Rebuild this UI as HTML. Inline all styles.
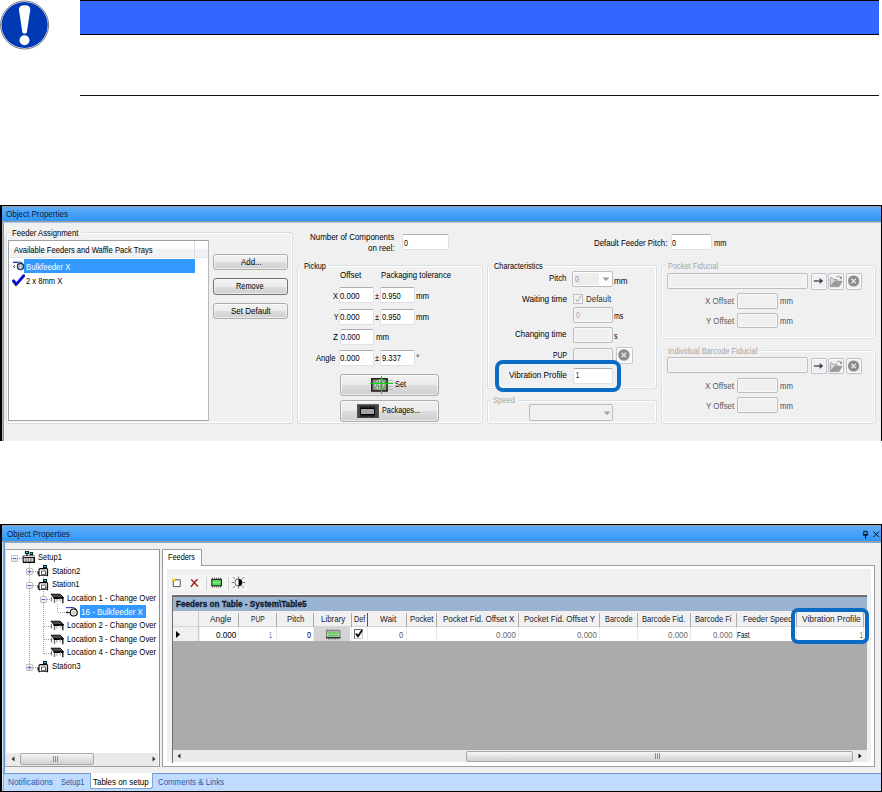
<!DOCTYPE html>
<html><head><meta charset="utf-8"><style>
html,body{margin:0;padding:0;width:882px;height:792px;overflow:hidden;background:#fff;position:relative;font-family:'Liberation Sans', sans-serif}
body>div,body>svg{position:absolute}
</style></head><body>
<svg style="left:0px;top:0px;" width="50" height="51" viewBox="0 0 50 51"><circle cx="24.6" cy="25" r="24" fill="#fff" stroke="#6A6A6A" stroke-width="0.9"/><circle cx="24.6" cy="25" r="23.1" fill="#0039B4"/><path d="M18.9 9.5 Q18.9 5.2 24.6 5.2 Q30.3 5.2 30.3 9.5 L26.8 32.6 Q24.6 35 22.4 32.6 Z" fill="#fff"/><circle cx="24.5" cy="40.2" r="5" fill="#fff"/></svg>
<div style="left:80px;top:0px;width:799px;height:35px;background:#3366FF;border-top:1px solid #000;border-bottom:1px solid #000;box-sizing:border-box"></div>
<div style="left:80px;top:95px;width:799px;height:1px;background:#111"></div>
<div style="left:0px;top:205px;width:882px;height:236px;background:#F0F0F0"></div>
<div style="left:0px;top:205px;width:882px;height:1px;background:#000"></div>
<div style="left:0px;top:205px;width:2px;height:236px;background:#000"></div>
<div style="left:881px;top:205px;width:1px;height:236px;background:#000"></div>
<div style="left:2px;top:206px;width:879px;height:1px;background:#9C9C9C"></div>
<div style="left:2px;top:207px;width:879px;height:14px;background:linear-gradient(#5EAEF9,#3196F6)"></div>
<div style="left:2px;top:221px;width:879px;height:1px;background:#9A9A9A"></div>
<div style="left:2px;top:222px;width:879px;height:1px;background:#A9C6EA"></div>
<div style="left:2px;top:222px;width:1px;height:219px;background:#B4B4B4"></div>
<div style="left:3px;top:223px;width:1px;height:218px;background:#6A98D0"></div>
<div style="left:5.54px;top:209.00px;font-size:8.7px;color:#0a1a3a;transform:scaleX(0.9236);line-height:10px;white-space:nowrap;transform-origin:0 0">Object Properties</div>
<div style="left:6px;top:232px;width:287px;height:192px;border:1px solid #D5DFE5;border-radius:3px;box-shadow:inset 0 0 0 1px #fff;box-sizing:border-box"></div>
<div style="left:9.5px;top:230px;width:72.3px;height:5px;background:#F0F0F0"></div>
<div style="left:12.06px;top:228.00px;font-size:8.7px;color:#000;transform:scaleX(0.8857);line-height:10px;white-space:nowrap;transform-origin:0 0">Feeder Assignment</div>
<div style="left:8px;top:240px;width:201px;height:181px;background:#fff;border:1px solid #A0A0A0;border-right-color:#B8B8B8;box-sizing:border-box"></div>
<div style="left:9px;top:241px;width:186px;height:16px;background:linear-gradient(#FFFFFF 0%,#FFFFFF 45%,#F1F2F4 50%,#F1F2F4 100%)"></div>
<div style="left:195px;top:241px;width:13px;height:16px;background:linear-gradient(#FFFFFF 0%,#FFFFFF 45%,#F1F2F4 50%,#F1F2F4 100%)"></div>
<div style="left:194px;top:241px;width:1px;height:16px;background:#DADDE1"></div>
<div style="left:9px;top:257px;width:199px;height:1px;background:#E3E5E8"></div>
<div style="left:14.06px;top:245.00px;font-size:8.7px;color:#000;transform:scaleX(0.8753);line-height:10px;white-space:nowrap;transform-origin:0 0">Available Feeders and Waffle Pack Trays</div>
<div style="left:24px;top:259px;width:171px;height:14px;background:#3399FF"></div>
<div style="left:26.15px;top:262.00px;font-size:8.7px;color:#fff;transform:scaleX(0.8905);line-height:10px;white-space:nowrap;transform-origin:0 0">Bulkfeeder X</div>
<div style="left:26.16px;top:275.50px;font-size:8.7px;color:#000;transform:scaleX(0.8740);line-height:10px;white-space:nowrap;transform-origin:0 0">2 x 8mm X</div>
<svg style="left:12px;top:259px;" width="13" height="12" viewBox="0 0 13 12"><path d="M0.8 3.3h5.5" stroke="#1030D8" stroke-width="1.3"/><path d="M6.3 3.1 Q9.5 2.4 10.8 4.6" fill="none" stroke="#203060" stroke-width="0.9"/><circle cx="8.5" cy="7.6" r="3.1" fill="#fff" stroke="#1A3060" stroke-width="1.3"/><path d="M7.6 5v5.2M9.4 5v5.2M5.8 7.6h5.4" stroke="#8890A0" stroke-width="0.6"/><path d="M3 6.3 L1.3 7.6 L3 8.9" fill="none" stroke="#203060" stroke-width="0.9"/></svg>
<svg style="left:12px;top:273px;" width="14" height="14" viewBox="0 0 14 14"><path d="M1.3 8.2 L4 11.9 L11.6 3.4" fill="none" stroke="#303030" stroke-width="2.4" stroke-linecap="round" stroke-linejoin="round"/><path d="M1.6 7.4 L4.3 11 L11.8 2.4" fill="none" stroke="#0A0AF0" stroke-width="2.4" stroke-linecap="round" stroke-linejoin="round"/></svg>
<div style="left:213px;top:254px;width:75px;height:16px;border:1px solid #ACACAC;border-radius:3px;box-sizing:border-box;background:linear-gradient(#F2F2F2 0%,#EBEBEB 50%,#DDDDDD 51%,#CFCFCF 100%);box-shadow:inset 0 0 0 1px rgba(255,255,255,0.6)"></div>
<div style="left:240.55px;top:257.00px;font-size:8.7px;color:#000;transform:scaleX(0.9074);line-height:10px;white-space:nowrap;transform-origin:0 0">Add...</div>
<div style="left:213px;top:278px;width:75px;height:17px;border:1px solid #707070;border-radius:3px;box-sizing:border-box;background:linear-gradient(#F2F2F2 0%,#EBEBEB 50%,#DDDDDD 51%,#CFCFCF 100%);box-shadow:inset 0 0 0 1px rgba(255,255,255,0.6)"></div>
<div style="left:236.08px;top:281.00px;font-size:8.7px;color:#000;transform:scaleX(0.8498);line-height:10px;white-space:nowrap;transform-origin:0 0">Remove</div>
<div style="left:213px;top:303px;width:75px;height:16px;border:1px solid #ACACAC;border-radius:3px;box-sizing:border-box;background:linear-gradient(#F2F2F2 0%,#EBEBEB 50%,#DDDDDD 51%,#CFCFCF 100%);box-shadow:inset 0 0 0 1px rgba(255,255,255,0.6)"></div>
<div style="left:230.54px;top:306.00px;font-size:8.7px;color:#000;transform:scaleX(0.9213);line-height:10px;white-space:nowrap;transform-origin:0 0">Set Default</div>
<div style="left:310.34px;top:232.00px;font-size:8.7px;color:#000;transform:scaleX(0.9129);line-height:10px;white-space:nowrap;transform-origin:0 0">Number of Components</div>
<div style="left:368.14px;top:243.20px;font-size:8.7px;color:#000;transform:scaleX(0.9108);line-height:10px;white-space:nowrap;transform-origin:0 0">on reel:</div>
<div style="left:402px;top:234px;width:47px;height:16px;background:#fff;border:1px solid #DDE1E6;border-top-color:#ABADB3;border-radius:2px;box-sizing:border-box"></div>
<div style="left:403.59px;top:238.00px;font-size:8.7px;color:#000;transform:scaleX(0.8258);line-height:10px;white-space:nowrap;transform-origin:0 0">0</div>
<div style="left:297px;top:265px;width:186px;height:159px;border:1px solid #D5DFE5;border-radius:3px;box-shadow:inset 0 0 0 1px #fff;box-sizing:border-box"></div>
<div style="left:301px;top:263px;width:27.9px;height:5px;background:#F0F0F0"></div>
<div style="left:303.58px;top:261.00px;font-size:8.7px;color:#000;transform:scaleX(0.8398);line-height:10px;white-space:nowrap;transform-origin:0 0">Pickup</div>
<div style="left:340.14px;top:269.80px;font-size:8.7px;color:#000;transform:scaleX(0.9205);line-height:10px;white-space:nowrap;transform-origin:0 0">Offset</div>
<div style="left:380.95px;top:269.80px;font-size:8.7px;color:#000;transform:scaleX(0.8903);line-height:10px;white-space:nowrap;transform-origin:0 0">Packaging tolerance</div>
<div style="left:332.57px;top:290.50px;font-size:8.7px;color:#000;transform:scaleX(0.8625);line-height:10px;white-space:nowrap;transform-origin:0 0">X</div>
<div style="left:338.5px;top:287px;width:35px;height:16px;background:#fff;border:1px solid #DDE1E6;border-top-color:#ABADB3;border-radius:2px;box-sizing:border-box"></div>
<div style="left:340.15px;top:290.50px;font-size:8.7px;color:#000;transform:scaleX(0.9011);line-height:10px;white-space:nowrap;transform-origin:0 0">0.000</div>
<div style="left:374.58px;top:290.50px;font-size:8.7px;color:#000;transform:scaleX(0.8366);line-height:10px;white-space:nowrap;transform-origin:0 0">±</div>
<div style="left:380px;top:287px;width:34.5px;height:16px;background:#fff;border:1px solid #DDE1E6;border-top-color:#ABADB3;border-radius:2px;box-sizing:border-box"></div>
<div style="left:381.87px;top:290.50px;font-size:8.7px;color:#000;transform:scaleX(0.8598);line-height:10px;white-space:nowrap;transform-origin:0 0">0.950</div>
<div style="left:416.35px;top:291.00px;font-size:8.7px;color:#000;transform:scaleX(0.9044);line-height:10px;white-space:nowrap;transform-origin:0 0">mm</div>
<div style="left:333.61px;top:311.90px;font-size:8.7px;color:#000;transform:scaleX(0.7763);line-height:10px;white-space:nowrap;transform-origin:0 0">Y</div>
<div style="left:338.5px;top:309px;width:35px;height:16px;background:#fff;border:1px solid #DDE1E6;border-top-color:#ABADB3;border-radius:2px;box-sizing:border-box"></div>
<div style="left:340.15px;top:311.90px;font-size:8.7px;color:#000;transform:scaleX(0.9011);line-height:10px;white-space:nowrap;transform-origin:0 0">0.000</div>
<div style="left:374.58px;top:311.90px;font-size:8.7px;color:#000;transform:scaleX(0.8366);line-height:10px;white-space:nowrap;transform-origin:0 0">±</div>
<div style="left:380px;top:309px;width:34.5px;height:16px;background:#fff;border:1px solid #DDE1E6;border-top-color:#ABADB3;border-radius:2px;box-sizing:border-box"></div>
<div style="left:381.87px;top:311.90px;font-size:8.7px;color:#000;transform:scaleX(0.8598);line-height:10px;white-space:nowrap;transform-origin:0 0">0.950</div>
<div style="left:416.35px;top:312.40px;font-size:8.7px;color:#000;transform:scaleX(0.9044);line-height:10px;white-space:nowrap;transform-origin:0 0">mm</div>
<div style="left:339.5px;top:329px;width:34px;height:16px;background:#fff;border:1px solid #DDE1E6;border-top-color:#ABADB3;border-radius:2px;box-sizing:border-box"></div>
<div style="left:332.53px;top:332.30px;font-size:8.7px;color:#000;transform:scaleX(0.9412);line-height:10px;white-space:nowrap;transform-origin:0 0">Z</div>
<div style="left:341.06px;top:332.40px;font-size:8.7px;color:#000;transform:scaleX(0.8736);line-height:10px;white-space:nowrap;transform-origin:0 0">0.000</div>
<div style="left:376.34px;top:332.20px;font-size:8.7px;color:#000;transform:scaleX(0.9113);line-height:10px;white-space:nowrap;transform-origin:0 0">mm</div>
<div style="left:339px;top:350px;width:34.5px;height:16px;background:#fff;border:1px solid #DDE1E6;border-top-color:#ABADB3;border-radius:2px;box-sizing:border-box"></div>
<div style="left:316.06px;top:353.00px;font-size:8.7px;color:#000;transform:scaleX(0.8770);line-height:10px;white-space:nowrap;transform-origin:0 0">Angle</div>
<div style="left:340.35px;top:353.00px;font-size:8.7px;color:#000;transform:scaleX(0.9011);line-height:10px;white-space:nowrap;transform-origin:0 0">0.000</div>
<div style="left:374.58px;top:353.00px;font-size:8.7px;color:#000;transform:scaleX(0.8366);line-height:10px;white-space:nowrap;transform-origin:0 0">±</div>
<div style="left:380px;top:350px;width:34.5px;height:16px;background:#fff;border:1px solid #DDE1E6;border-top-color:#ABADB3;border-radius:2px;box-sizing:border-box"></div>
<div style="left:381.86px;top:353.00px;font-size:8.7px;color:#000;transform:scaleX(0.8736);line-height:10px;white-space:nowrap;transform-origin:0 0">9.337</div>
<div style="left:416.30px;top:353.00px;font-size:8.7px;color:#000;transform:scaleX(1.0045);line-height:10px;white-space:nowrap;transform-origin:0 0">°</div>
<div style="left:340px;top:374px;width:99px;height:21.5px;border:1px solid #ACACAC;border-radius:3px;box-sizing:border-box;background:linear-gradient(#F2F2F2 0%,#EBEBEB 50%,#DDDDDD 51%,#CFCFCF 100%);box-shadow:inset 0 0 0 1px rgba(255,255,255,0.6)"></div>
<svg style="left:368px;top:375px;" width="28" height="20" viewBox="0 0 28 20"><rect x="3.8" y="3.8" width="15.3" height="12.2" fill="#8E8E8E" stroke="#000" stroke-width="1.3"/><circle cx="11.5" cy="9.6" r="4.4" fill="none" stroke="#F4F4F4" stroke-width="1" stroke-dasharray="1.2 0.8"/><path d="M11.5 5.2v8.8M7.1 9.6h8.8M9.3 5.8v7.6M13.7 5.8v7.6" stroke="#F0F0F0" stroke-width="0.8" stroke-dasharray="1.2 0.8"/><circle cx="13.5" cy="8.8" r="4.6" fill="none" stroke="#20E020" stroke-width="0.8"/><path d="M13.5 1V19M2 8.5H25" stroke="#00E000" stroke-width="1.1"/><path d="M20 5.3h5M20 7.3h5M20 11.6h5M20 14.5h5" stroke="#A8A8A8" stroke-width="0.7"/></svg>
<div style="left:394.98px;top:379.00px;font-size:8.7px;color:#000;transform:scaleX(0.8431);line-height:10px;white-space:nowrap;transform-origin:0 0">Set</div>
<div style="left:340px;top:400px;width:99px;height:21.5px;border:1px solid #ACACAC;border-radius:3px;box-sizing:border-box;background:linear-gradient(#F2F2F2 0%,#EBEBEB 50%,#DDDDDD 51%,#CFCFCF 100%);box-shadow:inset 0 0 0 1px rgba(255,255,255,0.6)"></div>
<svg style="left:356px;top:403px;" width="24" height="16" viewBox="0 0 24 16"><rect x="1.1" y="1.2" width="21.8" height="13.8" fill="#454545"/><rect x="4.2" y="4.6" width="14.8" height="7.8" fill="#000"/><path d="M4.6 3.9h14" stroke="#000" stroke-width="1.4" stroke-dasharray="1.1 1"/><path d="M4.6 13.1h14" stroke="#000" stroke-width="1.4" stroke-dasharray="1.1 1"/><rect x="5" y="6" width="13" height="5" fill="#A4A4A4"/></svg>
<div style="left:382.08px;top:405.20px;font-size:8.7px;color:#000;transform:scaleX(0.8369);line-height:10px;white-space:nowrap;transform-origin:0 0">Packages...</div>
<div style="left:594.25px;top:238.00px;font-size:8.7px;color:#000;transform:scaleX(0.8982);line-height:10px;white-space:nowrap;transform-origin:0 0">Default Feeder Pitch:</div>
<div style="left:670.5px;top:234px;width:41px;height:16px;background:#fff;border:1px solid #DDE1E6;border-top-color:#ABADB3;border-radius:2px;box-sizing:border-box"></div>
<div style="left:672.09px;top:238.00px;font-size:8.7px;color:#000;transform:scaleX(0.8258);line-height:10px;white-space:nowrap;transform-origin:0 0">0</div>
<div style="left:713.57px;top:237.80px;font-size:8.7px;color:#000;transform:scaleX(0.8630);line-height:10px;white-space:nowrap;transform-origin:0 0">mm</div>
<div style="left:487px;top:265px;width:170px;height:124px;border:1px solid #D5DFE5;border-radius:3px;box-shadow:inset 0 0 0 1px #fff;box-sizing:border-box"></div>
<div style="left:491px;top:263px;width:54.8px;height:5px;background:#F0F0F0"></div>
<div style="left:493.58px;top:261.00px;font-size:8.7px;color:#000;transform:scaleX(0.8494);line-height:10px;white-space:nowrap;transform-origin:0 0">Characteristics</div>
<div style="left:549.15px;top:273.00px;font-size:8.7px;color:#000;transform:scaleX(0.9002);line-height:10px;white-space:nowrap;transform-origin:0 0">Pitch</div>
<div style="left:572.2px;top:271.2px;width:40.4px;height:16.3px;background:#fff;border:1px solid #BDBDBD;border-radius:2px;box-sizing:border-box"></div>
<div style="left:573.5px;top:273px;width:25px;height:12px;background:#EDEDED"></div>
<svg style="left:601px;top:276px;" width="10" height="6" viewBox="0 0 10 6"><path d="M1.5 1.5h7l-3.5 3.5z" fill="#9A9A9A"/></svg>
<div style="left:574.59px;top:273.50px;font-size:8.7px;color:#959595;transform:scaleX(0.8258);line-height:10px;white-space:nowrap;transform-origin:0 0">0</div>
<div style="left:614.23px;top:275.50px;font-size:8.7px;color:#000;transform:scaleX(0.9389);line-height:10px;white-space:nowrap;transform-origin:0 0">mm</div>
<div style="left:521.53px;top:294.00px;font-size:8.7px;color:#000;transform:scaleX(0.9477);line-height:10px;white-space:nowrap;transform-origin:0 0">Waiting time</div>
<div style="left:573px;top:294.3px;width:10px;height:9.5px;background:#F4F4F4;border:1px solid #C0C0C0;box-sizing:border-box"></div>
<svg style="left:573px;top:294.3px;" width="10" height="10" viewBox="0 0 10 10"><path d="M2.5 5 L4.5 7.8 L7.8 1.8" fill="none" stroke="#A8A8A8" stroke-width="1"/></svg>
<div style="left:586.14px;top:294.00px;font-size:8.7px;color:#333;transform:scaleX(0.9153);line-height:10px;white-space:nowrap;transform-origin:0 0">Default</div>
<div style="left:573px;top:307px;width:39.5px;height:15.5px;background:#F0F0F0;border:1px solid #BDBDBD;border-radius:2px;box-sizing:border-box;box-shadow:inset 0 0 0 1px #F8F8F8"></div>
<div style="left:575.59px;top:310.00px;font-size:8.7px;color:#A8A8A8;transform:scaleX(0.8258);line-height:10px;white-space:nowrap;transform-origin:0 0">0</div>
<div style="left:614.30px;top:310.50px;font-size:8.7px;color:#000;transform:scaleX(0.8022);line-height:10px;white-space:nowrap;transform-origin:0 0">ms</div>
<div style="left:515.44px;top:329.40px;font-size:8.7px;color:#000;transform:scaleX(0.9191);line-height:10px;white-space:nowrap;transform-origin:0 0">Changing time</div>
<div style="left:573px;top:326.5px;width:40px;height:16px;background:#F0F0F0;border:1px solid #BDBDBD;border-radius:2px;box-sizing:border-box;box-shadow:inset 0 0 0 1px #F8F8F8"></div>
<div style="left:614.10px;top:330.70px;font-size:8.7px;color:#000;transform:scaleX(0.8058);line-height:10px;white-space:nowrap;transform-origin:0 0">s</div>
<div style="left:553.41px;top:350.00px;font-size:8.7px;color:#000;transform:scaleX(0.7888);line-height:10px;white-space:nowrap;transform-origin:0 0">PUP</div>
<div style="left:573px;top:347.5px;width:40px;height:16px;background:#F0F0F0;border:1px solid #BDBDBD;border-radius:2px;box-sizing:border-box;box-shadow:inset 0 0 0 1px #F8F8F8"></div>
<div style="left:616px;top:347px;width:16.5px;height:16.7px;background:#F4F4F4;border:1px solid #C4C8CC;border-radius:2px;box-sizing:border-box;box-shadow:inset 0 0 0 1px #fff"></div>
<svg style="left:616px;top:347px;" width="17" height="17" viewBox="0 0 17 17"><circle cx="7.9" cy="8" r="5.7" fill="#8A8A8A"/><path d="M5.6 5.7l4.6 4.6M10.2 5.7L5.6 10.3" stroke="#E4E4E4" stroke-width="1.5"/></svg>
<div style="left:508.53px;top:370.00px;font-size:8.7px;color:#000;transform:scaleX(0.9465);line-height:10px;white-space:nowrap;transform-origin:0 0">Vibration Profile</div>
<div style="left:573px;top:367.5px;width:40px;height:16px;background:#fff;border:1px solid #DDE1E6;border-top-color:#ABADB3;border-radius:2px;box-sizing:border-box"></div>
<div style="left:575.69px;top:370.00px;font-size:8.7px;color:#000;transform:scaleX(0.6194);line-height:10px;white-space:nowrap;transform-origin:0 0">1</div>
<div style="left:487px;top:399.5px;width:170px;height:24.5px;border:1px solid #D5DFE5;border-radius:3px;box-shadow:inset 0 0 0 1px #fff;box-sizing:border-box"></div>
<div style="left:490px;top:397.5px;width:28px;height:5px;background:#F0F0F0"></div>
<div style="left:492.56px;top:395.00px;font-size:8.7px;color:#A8A8A8;transform:scaleX(0.8756);line-height:10px;white-space:nowrap;transform-origin:0 0">Speed</div>
<div style="left:528.5px;top:404px;width:84px;height:16.5px;background:#F0F0F0;border:1px solid #BDBDBD;border-radius:2px;box-sizing:border-box"></div>
<svg style="left:602px;top:410px;" width="10" height="6" viewBox="0 0 10 6"><path d="M1.5 1.5h7l-3.5 3.5z" fill="#A0A0A0"/></svg>
<div style="left:494.5px;top:360.3px;width:126.8px;height:31.6px;border:4.4px solid #0B6BC2;border-radius:8px;box-sizing:border-box"></div>
<div style="left:661px;top:265px;width:215px;height:74px;border:1px solid #D5DFE5;border-radius:3px;box-shadow:inset 0 0 0 1px #fff;box-sizing:border-box"></div>
<div style="left:665.5px;top:263px;width:56.2px;height:5px;background:#F0F0F0"></div>
<div style="left:668.07px;top:261.00px;font-size:8.7px;color:#A6A6A6;transform:scaleX(0.8520);line-height:10px;white-space:nowrap;transform-origin:0 0">Pocket Fiducial</div>
<div style="left:666.5px;top:272.5px;width:141.5px;height:16px;background:#F0F0F0;border:1px solid #BDBDBD;border-radius:2px;box-sizing:border-box;box-shadow:inset 0 0 0 1px #F8F8F8"></div>
<div style="left:810.5px;top:273px;width:16.5px;height:16.5px;background:#F0F0F0;border:1px solid #BCC3CA;border-radius:2px;box-sizing:border-box;box-shadow:inset 0 0 0 1px #FAFAFA"></div>
<div style="left:828.3px;top:273px;width:16.2px;height:16.5px;background:#F0F0F0;border:1px solid #BCC3CA;border-radius:2px;box-sizing:border-box;box-shadow:inset 0 0 0 1px #FAFAFA"></div>
<div style="left:846.3px;top:273px;width:15.6px;height:16.5px;background:#F0F0F0;border:1px solid #BCC3CA;border-radius:2px;box-sizing:border-box;box-shadow:inset 0 0 0 1px #FAFAFA"></div>
<svg style="left:812px;top:275px;" width="14" height="12" viewBox="0 0 14 12"><path d="M1.8 6H9" stroke="#404040" stroke-width="1.3"/><path d="M7.6 3 L11.2 6 L7.6 9 Z" fill="#404040"/></svg>
<svg style="left:829px;top:274px;" width="15" height="15" viewBox="0 0 15 15"><path d="M1.3 4.6 Q1.5 3.4 2.6 3.6 L3.8 4.6 L4.6 5.6 L8 5.6 L8 7 L1.3 12.6 Z" fill="#DCDCDC" stroke="#8A8A8A" stroke-width="0.8"/><path d="M1.3 12.6 L5.6 7.2 L13.2 7.2 L10 12.6 Z" fill="#9A9A9A" stroke="#8A8A8A" stroke-width="0.6"/><path d="M7.4 3.4 Q9.6 0.6 11.6 3" fill="none" stroke="#9A9A9A" stroke-width="1"/><path d="M10.4 3.8 L13 2.4 L12.4 5.2 Z" fill="#707070"/></svg>
<svg style="left:847px;top:274px;" width="14" height="14" viewBox="0 0 14 14"><circle cx="6.6" cy="7" r="5.6" fill="#8A8A8A"/><path d="M4.4 4.8l4.4 4.4M8.8 4.8L4.4 9.2" stroke="#E6E6E6" stroke-width="1.4"/></svg>
<div style="left:705.44px;top:296.30px;font-size:8.7px;color:#5A5A5A;transform:scaleX(0.9253);line-height:10px;white-space:nowrap;transform-origin:0 0">X Offset</div>
<div style="left:736.5px;top:293.4px;width:41.2px;height:15.6px;background:#F0F0F0;border:1px solid #BDBDBD;border-radius:2px;box-sizing:border-box;box-shadow:inset 0 0 0 1px #F8F8F8"></div>
<div style="left:780.06px;top:296.30px;font-size:8.7px;color:#4A4A6A;transform:scaleX(0.8837);line-height:10px;white-space:nowrap;transform-origin:0 0">mm</div>
<div style="left:706.35px;top:316.00px;font-size:8.7px;color:#5A5A5A;transform:scaleX(0.9074);line-height:10px;white-space:nowrap;transform-origin:0 0">Y Offset</div>
<div style="left:736.5px;top:312.8px;width:41.2px;height:15.4px;background:#F0F0F0;border:1px solid #BDBDBD;border-radius:2px;box-sizing:border-box;box-shadow:inset 0 0 0 1px #F8F8F8"></div>
<div style="left:780.06px;top:316.00px;font-size:8.7px;color:#4A4A6A;transform:scaleX(0.8837);line-height:10px;white-space:nowrap;transform-origin:0 0">mm</div>
<div style="left:661px;top:349.5px;width:215px;height:74px;border:1px solid #D5DFE5;border-radius:3px;box-shadow:inset 0 0 0 1px #fff;box-sizing:border-box"></div>
<div style="left:665.5px;top:347.5px;width:95.3px;height:5px;background:#F0F0F0"></div>
<div style="left:668.07px;top:345.50px;font-size:8.7px;color:#A6A6A6;transform:scaleX(0.8601);line-height:10px;white-space:nowrap;transform-origin:0 0">Individual Barcode Fiducial</div>
<div style="left:666.5px;top:357.0px;width:141.5px;height:16px;background:#F0F0F0;border:1px solid #BDBDBD;border-radius:2px;box-sizing:border-box;box-shadow:inset 0 0 0 1px #F8F8F8"></div>
<div style="left:810.5px;top:357.5px;width:16.5px;height:16.5px;background:#F0F0F0;border:1px solid #BCC3CA;border-radius:2px;box-sizing:border-box;box-shadow:inset 0 0 0 1px #FAFAFA"></div>
<div style="left:828.3px;top:357.5px;width:16.2px;height:16.5px;background:#F0F0F0;border:1px solid #BCC3CA;border-radius:2px;box-sizing:border-box;box-shadow:inset 0 0 0 1px #FAFAFA"></div>
<div style="left:846.3px;top:357.5px;width:15.6px;height:16.5px;background:#F0F0F0;border:1px solid #BCC3CA;border-radius:2px;box-sizing:border-box;box-shadow:inset 0 0 0 1px #FAFAFA"></div>
<svg style="left:812px;top:359.5px;" width="14" height="12" viewBox="0 0 14 12"><path d="M1.8 6H9" stroke="#404040" stroke-width="1.3"/><path d="M7.6 3 L11.2 6 L7.6 9 Z" fill="#404040"/></svg>
<svg style="left:829px;top:358.5px;" width="15" height="15" viewBox="0 0 15 15"><path d="M1.3 4.6 Q1.5 3.4 2.6 3.6 L3.8 4.6 L4.6 5.6 L8 5.6 L8 7 L1.3 12.6 Z" fill="#DCDCDC" stroke="#8A8A8A" stroke-width="0.8"/><path d="M1.3 12.6 L5.6 7.2 L13.2 7.2 L10 12.6 Z" fill="#9A9A9A" stroke="#8A8A8A" stroke-width="0.6"/><path d="M7.4 3.4 Q9.6 0.6 11.6 3" fill="none" stroke="#9A9A9A" stroke-width="1"/><path d="M10.4 3.8 L13 2.4 L12.4 5.2 Z" fill="#707070"/></svg>
<svg style="left:847px;top:358.5px;" width="14" height="14" viewBox="0 0 14 14"><circle cx="6.6" cy="7" r="5.6" fill="#8A8A8A"/><path d="M4.4 4.8l4.4 4.4M8.8 4.8L4.4 9.2" stroke="#E6E6E6" stroke-width="1.4"/></svg>
<div style="left:705.44px;top:380.80px;font-size:8.7px;color:#5A5A5A;transform:scaleX(0.9253);line-height:10px;white-space:nowrap;transform-origin:0 0">X Offset</div>
<div style="left:736.5px;top:377.9px;width:41.2px;height:15.6px;background:#F0F0F0;border:1px solid #BDBDBD;border-radius:2px;box-sizing:border-box;box-shadow:inset 0 0 0 1px #F8F8F8"></div>
<div style="left:780.06px;top:380.80px;font-size:8.7px;color:#4A4A6A;transform:scaleX(0.8837);line-height:10px;white-space:nowrap;transform-origin:0 0">mm</div>
<div style="left:706.35px;top:400.50px;font-size:8.7px;color:#5A5A5A;transform:scaleX(0.9074);line-height:10px;white-space:nowrap;transform-origin:0 0">Y Offset</div>
<div style="left:736.5px;top:397.3px;width:41.2px;height:15.4px;background:#F0F0F0;border:1px solid #BDBDBD;border-radius:2px;box-sizing:border-box;box-shadow:inset 0 0 0 1px #F8F8F8"></div>
<div style="left:780.06px;top:400.50px;font-size:8.7px;color:#4A4A6A;transform:scaleX(0.8837);line-height:10px;white-space:nowrap;transform-origin:0 0">mm</div>
<div style="left:0px;top:524px;width:882px;height:268px;background:#F0F0F0"></div>
<div style="left:0px;top:524px;width:882px;height:1px;background:#000"></div>
<div style="left:0px;top:524px;width:2px;height:268px;background:#000"></div>
<div style="left:881px;top:524px;width:1px;height:268px;background:#000"></div>
<div style="left:0px;top:791px;width:882px;height:1px;background:#000"></div>
<div style="left:2px;top:525px;width:879px;height:1px;background:#9C9C9C"></div>
<div style="left:2px;top:526px;width:879px;height:15px;background:linear-gradient(#5EAEF9,#3196F6)"></div>
<div style="left:2px;top:541px;width:879px;height:1px;background:#9A9A9A"></div>
<div style="left:2px;top:542px;width:879px;height:1px;background:#84AADA"></div>
<div style="left:2px;top:542px;width:1px;height:249px;background:#D6E4F2"></div>
<div style="left:3px;top:542px;width:1px;height:249px;background:#A4A4A4"></div>
<div style="left:4px;top:542px;width:1px;height:231px;background:#6A98D0"></div>
<div style="left:6.83px;top:529.30px;font-size:8.7px;color:#0a1a3a;transform:scaleX(0.9371);line-height:10px;white-space:nowrap;transform-origin:0 0">Object Properties</div>
<svg style="left:862px;top:530px;" width="20" height="10" viewBox="0 0 20 10"><path d="M1.8 1.3h3.4v3.6h-3.4z" fill="none" stroke="#000" stroke-width="0.9"/><path d="M0.8 5h5.4M3.5 5v3.8" stroke="#000" stroke-width="0.9"/><path d="M11.5 1.5l5.5 5.5M17 1.5L11.5 7" stroke="#000" stroke-width="0.9"/></svg>
<div style="left:5px;top:549px;width:155px;height:218px;background:#fff;border:1px solid #A0A0A0;border-left-color:#DCDCDC;border-right-color:#8A9098;box-sizing:border-box"></div>
<div style="left:29px;top:563px;width:1px;height:104px;background:repeating-linear-gradient(#A0A0A0 0 1px,transparent 1px 2px)"></div>
<div style="left:43px;top:577px;width:1px;height:77px;background:repeating-linear-gradient(#A0A0A0 0 1px,transparent 1px 2px)"></div>
<div style="left:57px;top:604px;width:1px;height:7px;background:repeating-linear-gradient(#A0A0A0 0 1px,transparent 1px 2px)"></div>
<div style="left:19px;top:558px;width:4px;height:1px;background:repeating-linear-gradient(90deg,#A0A0A0 0 1px,transparent 1px 2px)"></div>
<div style="left:33px;top:571px;width:5px;height:1px;background:repeating-linear-gradient(90deg,#A0A0A0 0 1px,transparent 1px 2px)"></div>
<div style="left:33px;top:585px;width:5px;height:1px;background:repeating-linear-gradient(90deg,#A0A0A0 0 1px,transparent 1px 2px)"></div>
<div style="left:47px;top:599px;width:4px;height:1px;background:repeating-linear-gradient(90deg,#A0A0A0 0 1px,transparent 1px 2px)"></div>
<div style="left:44px;top:626px;width:7px;height:1px;background:repeating-linear-gradient(90deg,#A0A0A0 0 1px,transparent 1px 2px)"></div>
<div style="left:44px;top:639px;width:7px;height:1px;background:repeating-linear-gradient(90deg,#A0A0A0 0 1px,transparent 1px 2px)"></div>
<div style="left:44px;top:653px;width:7px;height:1px;background:repeating-linear-gradient(90deg,#A0A0A0 0 1px,transparent 1px 2px)"></div>
<div style="left:58px;top:612px;width:8px;height:1px;background:repeating-linear-gradient(90deg,#A0A0A0 0 1px,transparent 1px 2px)"></div>
<div style="left:33px;top:667px;width:5px;height:1px;background:repeating-linear-gradient(90deg,#A0A0A0 0 1px,transparent 1px 2px)"></div>
<div style="left:11px;top:555px;width:7px;height:7px;border:1px solid #C0C0C0;border-radius:1px;box-sizing:border-box;background:linear-gradient(#FDFDFD,#E2E2E2)"></div>
<svg style="left:11px;top:555px;" width="7" height="7" viewBox="0 0 7 7"><path d="M1.6 3.5h3.8" stroke="#4B66B8" stroke-width="1"/></svg>
<div style="left:26px;top:568px;width:7px;height:7px;border:1px solid #C0C0C0;border-radius:1px;box-sizing:border-box;background:linear-gradient(#FDFDFD,#E2E2E2)"></div>
<svg style="left:26px;top:568px;" width="7" height="7" viewBox="0 0 7 7"><path d="M1.6 3.5h3.8" stroke="#4B66B8" stroke-width="1"/><path d="M3.5 1.6v3.8" stroke="#6A84C8" stroke-width="1"/></svg>
<div style="left:26px;top:582px;width:7px;height:7px;border:1px solid #C0C0C0;border-radius:1px;box-sizing:border-box;background:linear-gradient(#FDFDFD,#E2E2E2)"></div>
<svg style="left:26px;top:582px;" width="7" height="7" viewBox="0 0 7 7"><path d="M1.6 3.5h3.8" stroke="#4B66B8" stroke-width="1"/></svg>
<div style="left:40px;top:596px;width:7px;height:7px;border:1px solid #C0C0C0;border-radius:1px;box-sizing:border-box;background:linear-gradient(#FDFDFD,#E2E2E2)"></div>
<svg style="left:40px;top:596px;" width="7" height="7" viewBox="0 0 7 7"><path d="M1.6 3.5h3.8" stroke="#4B66B8" stroke-width="1"/></svg>
<div style="left:26px;top:664px;width:7px;height:7px;border:1px solid #C0C0C0;border-radius:1px;box-sizing:border-box;background:linear-gradient(#FDFDFD,#E2E2E2)"></div>
<svg style="left:26px;top:664px;" width="7" height="7" viewBox="0 0 7 7"><path d="M1.6 3.5h3.8" stroke="#4B66B8" stroke-width="1"/><path d="M3.5 1.6v3.8" stroke="#6A84C8" stroke-width="1"/></svg>
<svg style="left:22px;top:550px;" width="14" height="14" viewBox="0 0 14 14"><rect x="1" y="7.6" width="11.8" height="5" fill="#8A8A8A"/><path d="M2.7 8v4.4M5.2 8v4.4M7.7 8v4.4M10.2 8v4.4" stroke="#E8E8E8" stroke-width="1"/><path d="M1 12.4h11.8M12.4 6v6.8" stroke="#000" stroke-width="1.1"/><rect x="1" y="5.6" width="11.8" height="1.6" fill="#fff"/><path d="M1 5.6h11.5" stroke="#222" stroke-width="0.6"/><path d="M1 7.4h11.8" stroke="#000" stroke-width="1"/><path d="M1 6v6.5" stroke="#000" stroke-width="0.8"/><rect x="2.9" y="1.1" width="4.1" height="2.8" fill="#000"/><rect x="3.8" y="1.8" width="2.3" height="1.2" fill="#00E0E8"/><rect x="4.4" y="3.8" width="1.2" height="1.8" fill="#000"/><rect x="7.7" y="2" width="3.4" height="3.1" fill="#000"/><rect x="8.4" y="2.7" width="2" height="1.2" fill="#00E0E8"/></svg>
<svg style="left:37px;top:564px;" width="12" height="13" viewBox="0 0 12 13"><rect x="6" y="1" width="4" height="3.4" fill="#000"/><rect x="6.8" y="1.8" width="2.4" height="1.4" fill="#00E0E8"/><path d="M2 11.3 V5.8 Q2 4.6 3.2 4.6 H9.6 Q10.6 4.6 10.6 5.8 V11.3" fill="#fff" stroke="#000" stroke-width="1.05"/><path d="M2 11.5h8.6" stroke="#000" stroke-width="0.7"/><path d="M1.2 7.5v3" stroke="#000" stroke-width="1.3"/><rect x="4.3" y="7" width="4.6" height="3.3" fill="none" stroke="#000" stroke-width="0.6"/><circle cx="2.3" cy="11.6" r="0.8" fill="#000"/><circle cx="10.2" cy="11.6" r="0.8" fill="#000"/><circle cx="8.9" cy="9.5" r="0.6" fill="#000"/></svg>
<svg style="left:37px;top:577.5px;" width="12" height="13" viewBox="0 0 12 13"><rect x="6" y="1" width="4" height="3.4" fill="#000"/><rect x="6.8" y="1.8" width="2.4" height="1.4" fill="#00E0E8"/><path d="M2 11.3 V5.8 Q2 4.6 3.2 4.6 H9.6 Q10.6 4.6 10.6 5.8 V11.3" fill="#fff" stroke="#000" stroke-width="1.05"/><path d="M2 11.5h8.6" stroke="#000" stroke-width="0.7"/><path d="M1.2 7.5v3" stroke="#000" stroke-width="1.3"/><rect x="4.3" y="7" width="4.6" height="3.3" fill="none" stroke="#000" stroke-width="0.6"/><circle cx="2.3" cy="11.6" r="0.8" fill="#000"/><circle cx="10.2" cy="11.6" r="0.8" fill="#000"/><circle cx="8.9" cy="9.5" r="0.6" fill="#000"/></svg>
<svg style="left:37px;top:660px;" width="12" height="13" viewBox="0 0 12 13"><rect x="6" y="1" width="4" height="3.4" fill="#000"/><rect x="6.8" y="1.8" width="2.4" height="1.4" fill="#00E0E8"/><path d="M2 11.3 V5.8 Q2 4.6 3.2 4.6 H9.6 Q10.6 4.6 10.6 5.8 V11.3" fill="#fff" stroke="#000" stroke-width="1.05"/><path d="M2 11.5h8.6" stroke="#000" stroke-width="0.7"/><path d="M1.2 7.5v3" stroke="#000" stroke-width="1.3"/><rect x="4.3" y="7" width="4.6" height="3.3" fill="none" stroke="#000" stroke-width="0.6"/><circle cx="2.3" cy="11.6" r="0.8" fill="#000"/><circle cx="10.2" cy="11.6" r="0.8" fill="#000"/><circle cx="8.9" cy="9.5" r="0.6" fill="#000"/></svg>
<svg style="left:50px;top:593px;" width="15" height="11" viewBox="0 0 15 11"><path d="M1.5 4 V8.5" stroke="#777" stroke-width="1.2"/><path d="M1 1.2 H10.2 L13.6 4.6 H3.8 Z" fill="#4A4A4A" stroke="#000" stroke-width="0.9"/><rect x="3.6" y="4.3" width="10" height="1.7" fill="#000"/><path d="M4.5 6v4" stroke="#777" stroke-width="1.4"/><path d="M6.9 6v2.8" stroke="#999" stroke-width="1"/><path d="M10.2 5v3.5" stroke="#999" stroke-width="0.9"/><path d="M12.8 6v4.2" stroke="#111" stroke-width="1.3"/></svg>
<svg style="left:50px;top:620px;" width="15" height="11" viewBox="0 0 15 11"><path d="M1.5 4 V8.5" stroke="#777" stroke-width="1.2"/><path d="M1 1.2 H10.2 L13.6 4.6 H3.8 Z" fill="#4A4A4A" stroke="#000" stroke-width="0.9"/><rect x="3.6" y="4.3" width="10" height="1.7" fill="#000"/><path d="M4.5 6v4" stroke="#777" stroke-width="1.4"/><path d="M6.9 6v2.8" stroke="#999" stroke-width="1"/><path d="M10.2 5v3.5" stroke="#999" stroke-width="0.9"/><path d="M12.8 6v4.2" stroke="#111" stroke-width="1.3"/></svg>
<svg style="left:50px;top:634px;" width="15" height="11" viewBox="0 0 15 11"><path d="M1.5 4 V8.5" stroke="#777" stroke-width="1.2"/><path d="M1 1.2 H10.2 L13.6 4.6 H3.8 Z" fill="#4A4A4A" stroke="#000" stroke-width="0.9"/><rect x="3.6" y="4.3" width="10" height="1.7" fill="#000"/><path d="M4.5 6v4" stroke="#777" stroke-width="1.4"/><path d="M6.9 6v2.8" stroke="#999" stroke-width="1"/><path d="M10.2 5v3.5" stroke="#999" stroke-width="0.9"/><path d="M12.8 6v4.2" stroke="#111" stroke-width="1.3"/></svg>
<svg style="left:50px;top:647px;" width="15" height="11" viewBox="0 0 15 11"><path d="M1.5 4 V8.5" stroke="#777" stroke-width="1.2"/><path d="M1 1.2 H10.2 L13.6 4.6 H3.8 Z" fill="#4A4A4A" stroke="#000" stroke-width="0.9"/><rect x="3.6" y="4.3" width="10" height="1.7" fill="#000"/><path d="M4.5 6v4" stroke="#777" stroke-width="1.4"/><path d="M6.9 6v2.8" stroke="#999" stroke-width="1"/><path d="M10.2 5v3.5" stroke="#999" stroke-width="0.9"/><path d="M12.8 6v4.2" stroke="#111" stroke-width="1.3"/></svg>
<svg style="left:65px;top:605px;" width="13" height="13" viewBox="0 0 13 13"><path d="M1 2.6h5.5" stroke="#3040D8" stroke-width="1.1"/><path d="M6 2.6 Q9 2.2 11 4" fill="none" stroke="#111" stroke-width="0.9"/><circle cx="8.7" cy="7.5" r="3.5" fill="#fff" stroke="#000" stroke-width="1.15"/><path d="M8.7 4.5v6M5.7 7.5h6M6.6 5.4l4.2 4.2M10.8 5.4l-4.2 4.2" stroke="#999" stroke-width="0.5"/><circle cx="8.7" cy="7.5" r="0.9" fill="#F0E000"/><path d="M1.5 7.5h3.5" stroke="#111" stroke-width="0.9"/><path d="M2.6 6.2L1.2 7.5L2.6 8.8" fill="none" stroke="#111" stroke-width="0.9"/></svg>
<div style="left:37.87px;top:552.00px;font-size:8.7px;color:#000;transform:scaleX(0.8676);line-height:10px;white-space:nowrap;transform-origin:0 0">Setup1</div>
<div style="left:52.46px;top:566.00px;font-size:8.7px;color:#000;transform:scaleX(0.8843);line-height:10px;white-space:nowrap;transform-origin:0 0">Station2</div>
<div style="left:52.47px;top:579.20px;font-size:8.7px;color:#000;transform:scaleX(0.8623);line-height:10px;white-space:nowrap;transform-origin:0 0">Station1</div>
<div style="left:67.15px;top:593.00px;font-size:8.7px;color:#000;transform:scaleX(0.8966);line-height:10px;white-space:nowrap;transform-origin:0 0">Location 1 - Change Over</div>
<div style="left:80px;top:605px;width:66px;height:12.5px;background:#3399FF"></div>
<div style="left:81.44px;top:606.70px;font-size:8.7px;color:#fff;transform:scaleX(0.9222);line-height:10px;white-space:nowrap;transform-origin:0 0">16 - Bulkfeeder X</div>
<div style="left:67.15px;top:620.00px;font-size:8.7px;color:#000;transform:scaleX(0.8966);line-height:10px;white-space:nowrap;transform-origin:0 0">Location 2 - Change Over</div>
<div style="left:67.15px;top:633.70px;font-size:8.7px;color:#000;transform:scaleX(0.8966);line-height:10px;white-space:nowrap;transform-origin:0 0">Location 3 - Change Over</div>
<div style="left:67.15px;top:646.80px;font-size:8.7px;color:#000;transform:scaleX(0.8966);line-height:10px;white-space:nowrap;transform-origin:0 0">Location 4 - Change Over</div>
<div style="left:52.05px;top:660.60px;font-size:8.7px;color:#000;transform:scaleX(0.8968);line-height:10px;white-space:nowrap;transform-origin:0 0">Station3</div>
<div style="left:6px;top:753px;width:152px;height:13px;background:#EAEAEA"></div>
<div style="left:20px;top:753px;width:73.5px;height:12.3px;border:1px solid #A8A8A8;border-radius:2px;box-sizing:border-box;background:linear-gradient(#F6F6F6,#E2E2E2 50%,#D0D0D0)"></div>
<svg style="left:52px;top:755px;" width="8" height="8" viewBox="0 0 8 8"><path d="M1.5 1v6M3.5 1v6M5.5 1v6" stroke="#777" stroke-width="0.8"/></svg>
<svg style="left:10px;top:755px;" width="6" height="8" viewBox="0 0 6 8"><path d="M4.5 1.5v5L1.5 4z" fill="#333"/></svg>
<svg style="left:151px;top:755px;" width="6" height="8" viewBox="0 0 6 8"><path d="M1.5 1.5v5L4.5 4z" fill="#333"/></svg>
<div style="left:162px;top:565px;width:713px;height:202px;background:#fff;border:1px solid #9A9EA4;box-sizing:border-box"></div>
<div style="left:167px;top:569px;width:704px;height:193px;background:#F0F0F0"></div>
<div style="left:162px;top:549px;width:40px;height:17px;background:#fff;border:1px solid #9A9EA4;border-bottom:none;box-sizing:border-box"></div>
<div style="left:168.28px;top:552.30px;font-size:8.7px;color:#000;transform:scaleX(0.8439);line-height:10px;white-space:nowrap;transform-origin:0 0">Feeders</div>
<div style="left:169px;top:574.5px;width:80px;height:16px;background:#F4F4F4"></div>
<svg style="left:171px;top:578px;" width="11" height="10" viewBox="0 0 11 10"><path d="M2.3 2.5 V8.6 H9.2 V1.8 H4" fill="#fff" stroke="#555" stroke-width="1"/><path d="M1.5 0.8 L4.2 3.5 M1 3.2 L3.6 0.6" stroke="#E8D020" stroke-width="1.2"/></svg>
<svg style="left:189px;top:578px;" width="11" height="10" viewBox="0 0 11 10"><path d="M2.2 1.5 Q5 4.5 9 8.5M8.6 1.3 Q5 4.5 2 8.7" fill="none" stroke="#A82020" stroke-width="1.5"/></svg>
<div style="left:206px;top:577px;width:1px;height:13px;background:#D0D0D0"></div>
<svg style="left:210px;top:577px;" width="13" height="11" viewBox="0 0 13 11"><rect x="1.2" y="1.8" width="10.8" height="7.6" fill="#2A2A2A"/><rect x="2.4" y="3" width="8.4" height="5.2" fill="#50E050"/><path d="M2.4 5.6h8.4" stroke="#B0F8B0" stroke-width="0.7"/><path d="M2 1.2h9.5M2 10h9.5" stroke="#333" stroke-width="0.9" stroke-dasharray="1 1"/></svg>
<div style="left:228px;top:577px;width:1px;height:13px;background:#D0D0D0"></div>
<svg style="left:231px;top:576px;" width="15" height="13" viewBox="0 0 15 13"><path d="M7.5 0.5v2.2M7.5 10.3v2.2M0.6 6.5h2.4M12 6.5h2.4M2 1.2l1.8 1.8M13 1.2l-1.8 1.8M2 11.8l1.8-1.8M13 11.8l-1.8-1.8" stroke="#555" stroke-width="0.8"/><circle cx="7.5" cy="6.5" r="3.6" fill="#fff" stroke="#333" stroke-width="0.8"/><path d="M7.5 2.9 A3.6 3.6 0 0 1 7.5 10.1 Z" fill="#000"/></svg>
<div style="left:171.5px;top:593.5px;width:695.0px;height:1px;background:#FCFCFC"></div>
<div style="left:171.5px;top:594.5px;width:695.0px;height:155.5px;background:#ABABAB"></div>
<div style="left:171.5px;top:594.5px;width:695.0px;height:2px;background:#6E6E6E"></div>
<div style="left:171.5px;top:594.5px;width:1.5px;height:168px;background:#6E6E6E"></div>
<div style="left:173.0px;top:596.5px;width:693.5px;height:14.8px;background:#9BB3D2"></div>
<div style="left:175.53px;top:599.30px;font-size:8.7px;color:#0C1830;transform:scaleX(0.9406);line-height:10px;white-space:nowrap;transform-origin:0 0;font-weight:bold;-webkit-text-stroke:0.3px #0C1830">Feeders on Table - System\Table5</div>
<div style="left:173.0px;top:611.3px;width:693.5px;height:15.2px;background:#F0F0F0"></div>
<div style="left:173.0px;top:626.3px;width:693.5px;height:1px;background:#D6D6D6"></div>
<div style="left:198.5px;top:627.3px;width:668.0px;height:14px;background:#fff"></div>
<div style="left:173.0px;top:627.3px;width:27px;height:14px;background:#F0F0F0"></div>
<div style="left:198px;top:611.3px;width:1px;height:30px;background:#C8C8C8"></div>
<svg style="left:175px;top:630px;" width="6" height="9" viewBox="0 0 6 9"><path d="M1 1v7l4-3.5z" fill="#000"/></svg>
<div style="left:237.8px;top:612.5px;width:1px;height:14px;background:#ABABAB"></div>
<div style="left:237.8px;top:627.3px;width:1px;height:14px;background:#EAEAEA"></div>
<div style="left:275.5px;top:612.5px;width:1px;height:14px;background:#ABABAB"></div>
<div style="left:275.5px;top:627.3px;width:1px;height:14px;background:#EAEAEA"></div>
<div style="left:313.3px;top:612.5px;width:1px;height:14px;background:#ABABAB"></div>
<div style="left:313.3px;top:627.3px;width:1px;height:14px;background:#EAEAEA"></div>
<div style="left:350.5px;top:612.5px;width:1px;height:14px;background:#ABABAB"></div>
<div style="left:350.5px;top:627.3px;width:1px;height:14px;background:#EAEAEA"></div>
<div style="left:367.2px;top:612.5px;width:1px;height:14px;background:#ABABAB"></div>
<div style="left:367.2px;top:627.3px;width:1px;height:14px;background:#EAEAEA"></div>
<div style="left:405.8px;top:612.5px;width:1px;height:14px;background:#ABABAB"></div>
<div style="left:405.8px;top:627.3px;width:1px;height:14px;background:#EAEAEA"></div>
<div style="left:435.6px;top:612.5px;width:1px;height:14px;background:#ABABAB"></div>
<div style="left:435.6px;top:627.3px;width:1px;height:14px;background:#EAEAEA"></div>
<div style="left:517.6px;top:612.5px;width:1px;height:14px;background:#ABABAB"></div>
<div style="left:517.6px;top:627.3px;width:1px;height:14px;background:#EAEAEA"></div>
<div style="left:599px;top:612.5px;width:1px;height:14px;background:#ABABAB"></div>
<div style="left:599px;top:627.3px;width:1px;height:14px;background:#EAEAEA"></div>
<div style="left:636.7px;top:612.5px;width:1px;height:14px;background:#ABABAB"></div>
<div style="left:636.7px;top:627.3px;width:1px;height:14px;background:#EAEAEA"></div>
<div style="left:689.6px;top:612.5px;width:1px;height:14px;background:#ABABAB"></div>
<div style="left:689.6px;top:627.3px;width:1px;height:14px;background:#EAEAEA"></div>
<div style="left:736px;top:612.5px;width:1px;height:14px;background:#ABABAB"></div>
<div style="left:736px;top:627.3px;width:1px;height:14px;background:#EAEAEA"></div>
<div style="left:795.5px;top:612.5px;width:1px;height:14px;background:#ABABAB"></div>
<div style="left:795.5px;top:627.3px;width:1px;height:14px;background:#EAEAEA"></div>
<div style="left:863px;top:612.5px;width:1px;height:14px;background:#ABABAB"></div>
<div style="left:863px;top:627.3px;width:1px;height:14px;background:#EAEAEA"></div>
<div style="left:367.2px;top:613px;width:1.2px;height:13px;background:#555"></div>
<div style="left:313.8px;top:627.3px;width:36.7px;height:14px;background:#D4D4D4"></div>
<div style="left:209.52px;top:614.30px;font-size:8.7px;color:#1a1a2a;transform:scaleX(0.9580);line-height:10px;white-space:nowrap;transform-origin:0 0">Angle</div>
<div style="left:251.32px;top:614.30px;font-size:8.7px;color:#1a1a2a;transform:scaleX(0.7608);line-height:10px;white-space:nowrap;transform-origin:0 0">PUP</div>
<div style="left:287.35px;top:614.30px;font-size:8.7px;color:#1a1a2a;transform:scaleX(0.9054);line-height:10px;white-space:nowrap;transform-origin:0 0">Pitch</div>
<div style="left:321.34px;top:614.30px;font-size:8.7px;color:#1a1a2a;transform:scaleX(0.9148);line-height:10px;white-space:nowrap;transform-origin:0 0">Library</div>
<div style="left:354.09px;top:614.30px;font-size:8.7px;color:#1a1a2a;transform:scaleX(0.8277);line-height:10px;white-space:nowrap;transform-origin:0 0">Def</div>
<div style="left:379.53px;top:614.30px;font-size:8.7px;color:#1a1a2a;transform:scaleX(0.9495);line-height:10px;white-space:nowrap;transform-origin:0 0">Wait</div>
<div style="left:409.56px;top:614.30px;font-size:8.7px;color:#1a1a2a;transform:scaleX(0.8847);line-height:10px;white-space:nowrap;transform-origin:0 0">Pocket</div>
<div style="left:443.34px;top:614.30px;font-size:8.7px;color:#1a1a2a;transform:scaleX(0.9261);line-height:10px;white-space:nowrap;transform-origin:0 0">Pocket Fid. Offset X</div>
<div style="left:524.04px;top:614.30px;font-size:8.7px;color:#1a1a2a;transform:scaleX(0.9228);line-height:10px;white-space:nowrap;transform-origin:0 0">Pocket Fid. Offset Y</div>
<div style="left:605.08px;top:614.30px;font-size:8.7px;color:#1a1a2a;transform:scaleX(0.8498);line-height:10px;white-space:nowrap;transform-origin:0 0">Barcode</div>
<div style="left:642.46px;top:614.30px;font-size:8.7px;color:#1a1a2a;transform:scaleX(0.8728);line-height:10px;white-space:nowrap;transform-origin:0 0">Barcode Fid.</div>
<div style="left:695.37px;top:614.30px;font-size:8.7px;color:#1a1a2a;transform:scaleX(0.8687);line-height:10px;white-space:nowrap;transform-origin:0 0">Barcode Fi</div>
<div style="left:743.05px;top:614.30px;font-size:8.7px;color:#1a1a2a;transform:scaleX(0.8990);line-height:10px;white-space:nowrap;transform-origin:0 0">Feeder Speed</div>
<div style="left:802.02px;top:614.30px;font-size:8.7px;color:#1a1a2a;transform:scaleX(0.9596);line-height:10px;white-space:nowrap;transform-origin:0 0">Vibration Profile</div>
<div style="left:215.53px;top:630.00px;font-size:8.7px;color:#000;transform:scaleX(0.9379);line-height:10px;white-space:nowrap;transform-origin:0 0">0.000</div>
<div style="left:269.29px;top:630.00px;font-size:8.7px;color:#5070A8;transform:scaleX(0.6194);line-height:10px;white-space:nowrap;transform-origin:0 0">1</div>
<div style="left:306.59px;top:630.00px;font-size:8.7px;color:#000;transform:scaleX(0.8258);line-height:10px;white-space:nowrap;transform-origin:0 0">0</div>
<svg style="left:325px;top:629px;" width="17" height="11" viewBox="0 0 17 11"><path d="M2 1.2h12" stroke="#333" stroke-width="1" stroke-dasharray="1.2 1.1"/><rect x="1.5" y="1.8" width="13.5" height="6.8" fill="#C4C4C4" stroke="#7A7A7A" stroke-width="1"/><rect x="3" y="3.4" width="10.5" height="1.3" fill="#3CD83C"/><rect x="3" y="5.9" width="10.5" height="1.3" fill="#3CD83C"/><path d="M1 8.8h14.5" stroke="#111" stroke-width="1.1"/><path d="M3 10h11" stroke="#444" stroke-width="0.8" stroke-dasharray="1 1.3"/></svg>
<div style="left:353.8px;top:629.4px;width:9.2px;height:9.2px;background:#fff;border:1px solid #C8C8C8;border-top-color:#666;border-left-color:#666;box-sizing:border-box"></div>
<svg style="left:353.8px;top:629.4px;" width="10" height="10" viewBox="0 0 10 10"><path d="M2 4.6 L4 7.2 L8.2 1.3" fill="none" stroke="#000" stroke-width="1.8"/></svg>
<div style="left:398.76px;top:630.00px;font-size:8.7px;color:#555;transform:scaleX(0.8877);line-height:10px;white-space:nowrap;transform-origin:0 0">0</div>
<div style="left:495.54px;top:630.00px;font-size:8.7px;color:#6A6A6A;transform:scaleX(0.9195);line-height:10px;white-space:nowrap;transform-origin:0 0">0.000</div>
<div style="left:576.84px;top:630.00px;font-size:8.7px;color:#6A6A6A;transform:scaleX(0.9195);line-height:10px;white-space:nowrap;transform-origin:0 0">0.000</div>
<div style="left:667.84px;top:630.00px;font-size:8.7px;color:#6A6A6A;transform:scaleX(0.9195);line-height:10px;white-space:nowrap;transform-origin:0 0">0.000</div>
<div style="left:713.15px;top:630.00px;font-size:8.7px;color:#6A6A6A;transform:scaleX(0.9011);line-height:10px;white-space:nowrap;transform-origin:0 0">0.000</div>
<div style="left:737.13px;top:630.20px;font-size:8.7px;color:#000;transform:scaleX(0.7394);line-height:10px;white-space:nowrap;transform-origin:0 0">Fast</div>
<div style="left:859.54px;top:630.00px;font-size:8.7px;color:#333;transform:scaleX(0.5161);line-height:10px;white-space:nowrap;transform-origin:0 0">1</div>
<div style="left:173.0px;top:750px;width:693.5px;height:12px;background:#EAEAEA"></div>
<div style="left:466px;top:750.5px;width:387px;height:11px;border:1px solid #A8A8A8;border-radius:2px;box-sizing:border-box;background:linear-gradient(#F6F6F6,#E2E2E2 50%,#D0D0D0)"></div>
<svg style="left:654px;top:752px;" width="8" height="8" viewBox="0 0 8 8"><path d="M1.5 1v6M3.5 1v6M5.5 1v6" stroke="#777" stroke-width="0.8"/></svg>
<svg style="left:176px;top:752px;" width="6" height="8" viewBox="0 0 6 8"><path d="M4.5 1.5v5L1.5 4z" fill="#333"/></svg>
<svg style="left:857px;top:752px;" width="6" height="8" viewBox="0 0 6 8"><path d="M1.5 1.5v5L4.5 4z" fill="#111"/></svg>
<div style="left:791px;top:608.3px;width:77.5px;height:35.3px;border:4.5px solid #0B6BC2;border-radius:7px;box-sizing:border-box"></div>
<div style="left:4px;top:773px;width:877px;height:18px;background:#BFDBFF"></div>
<div style="left:4px;top:773px;width:877px;height:1px;background:#6F9BD3"></div>
<div style="left:90px;top:773px;width:63px;height:16px;background:#fff;border:1px solid #7FA5D0;border-top:none;border-bottom-right-radius:3px;box-sizing:border-box"></div>
<div style="left:57px;top:776px;width:1px;height:13px;background:repeating-linear-gradient(rgba(255,255,255,0.5) 0 1px,transparent 1px 3px)"></div>
<div style="left:7.52px;top:777.00px;font-size:8.7px;color:#2F5A9E;transform:scaleX(0.9508);line-height:10px;white-space:nowrap;transform-origin:0 0">Notifications</div>
<div style="left:61.17px;top:777.00px;font-size:8.7px;color:#2F5A9E;transform:scaleX(0.8531);line-height:10px;white-space:nowrap;transform-origin:0 0">Setup1</div>
<div style="left:92.84px;top:777.00px;font-size:8.7px;color:#000;transform:scaleX(0.9152);line-height:10px;white-space:nowrap;transform-origin:0 0">Tables on setup</div>
<div style="left:157.55px;top:777.20px;font-size:8.7px;color:#2F5A9E;transform:scaleX(0.9053);line-height:10px;white-space:nowrap;transform-origin:0 0">Comments & Links</div>
</body></html>
